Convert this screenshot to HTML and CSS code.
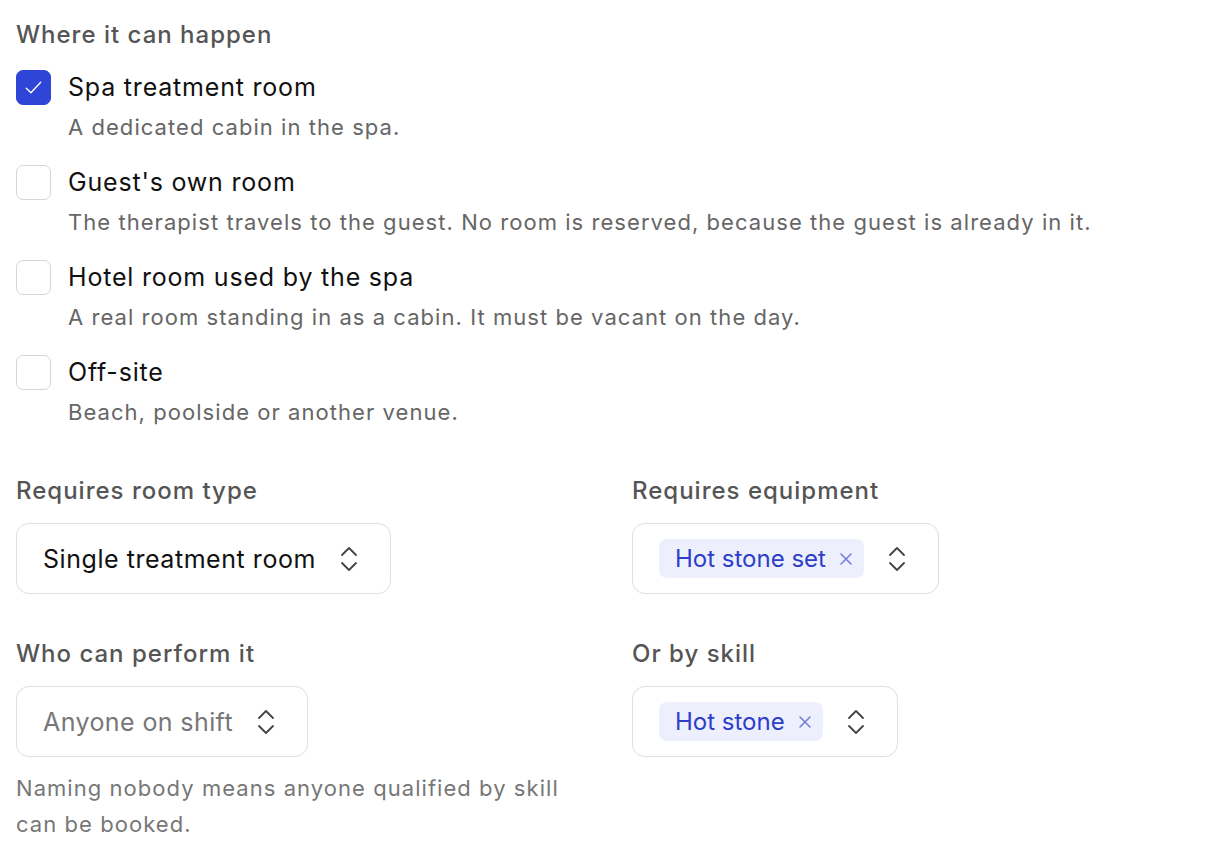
FILE: index.html
```html
<!DOCTYPE html>
<html>
<head>
<meta charset="utf-8">
<link rel="stylesheet" href="styles.css">
</head>
<body>
<div class="page">
  <h2 class="section-title">Where it can happen</h2>
  <div class="options">
    <div class="option">
      <span class="box checked"><svg viewBox="0 0 16 16" width="21" height="21"><path d="M2.5 8.5l3.5 3.5 7.5-8" fill="none" stroke="#fff" stroke-width="1.05" stroke-linecap="round" stroke-linejoin="round"/></svg></span>
      <div class="opt-text">
        <div class="opt-label">Spa treatment room</div>
        <div class="opt-desc">A dedicated cabin in the spa.</div>
      </div>
    </div>
    <div class="option">
      <span class="box"></span>
      <div class="opt-text">
        <div class="opt-label">Guest's own room</div>
        <div class="opt-desc">The therapist travels to the guest. No room is reserved, because the guest is already in it.</div>
      </div>
    </div>
    <div class="option">
      <span class="box"></span>
      <div class="opt-text">
        <div class="opt-label">Hotel room used by the spa</div>
        <div class="opt-desc">A real room standing in as a cabin. It must be vacant on the day.</div>
      </div>
    </div>
    <div class="option">
      <span class="box"></span>
      <div class="opt-text">
        <div class="opt-label">Off-site</div>
        <div class="opt-desc">Beach, poolside or another venue.</div>
      </div>
    </div>
  </div>

  <div class="fields">
    <div class="field">
      <div class="field-label">Requires room type</div>
      <div class="select">
        <span class="value">Single treatment room</span>
        <svg class="chev" viewBox="0 0 18 30" width="18" height="30"><path d="M2 11l7-7 7 7M2 19l7 7 7-7" fill="none" stroke="#444" stroke-width="1.8" stroke-linecap="round" stroke-linejoin="round"/></svg>
      </div>
    </div>
    <div class="field">
      <div class="field-label">Requires equipment</div>
      <div class="select">
        <span class="chip">Hot stone set<svg class="x" viewBox="0 0 14 14" width="14" height="14"><path d="M2 2l10 10M12 2L2 12" fill="none" stroke="#6f7bd6" stroke-width="1.5" stroke-linecap="round"/></svg></span>
        <svg class="chev" viewBox="0 0 18 30" width="18" height="30"><path d="M2 11l7-7 7 7M2 19l7 7 7-7" fill="none" stroke="#444" stroke-width="1.8" stroke-linecap="round" stroke-linejoin="round"/></svg>
      </div>
    </div>
    <div class="field">
      <div class="field-label">Who can perform it</div>
      <div class="select">
        <span class="value placeholder">Anyone on shift</span>
        <svg class="chev" viewBox="0 0 18 30" width="18" height="30"><path d="M2 11l7-7 7 7M2 19l7 7 7-7" fill="none" stroke="#444" stroke-width="1.8" stroke-linecap="round" stroke-linejoin="round"/></svg>
      </div>
      <p class="help">Naming nobody means anyone qualified by skill can be booked.</p>
    </div>
    <div class="field">
      <div class="field-label">Or by skill</div>
      <div class="select">
        <span class="chip">Hot stone<svg class="x" viewBox="0 0 14 14" width="14" height="14"><path d="M2 2l10 10M12 2L2 12" fill="none" stroke="#6f7bd6" stroke-width="1.5" stroke-linecap="round"/></svg></span>
        <svg class="chev" viewBox="0 0 18 30" width="18" height="30"><path d="M2 11l7-7 7 7M2 19l7 7 7-7" fill="none" stroke="#444" stroke-width="1.8" stroke-linecap="round" stroke-linejoin="round"/></svg>
      </div>
    </div>
  </div>
</div>
</body>
</html>
```

FILE: styles.css
```css
* { box-sizing: border-box; }
html, body { margin: 0; padding: 0; background: #fff; }
body {
  font-family: Inter, "Noto Sans", sans-serif;
  color: #111;
}
.page {
  padding: 17px 16px 0 16px;
}
.section-title {
  margin: 0 0 16px 0;
  font-size: 24px;
  line-height: 36px;
  font-weight: 500;
  letter-spacing: 1px;
  color: #555;
}
.options {
  display: flex;
  flex-direction: column;
  gap: 21px;
}
.option {
  display: flex;
  align-items: flex-start;
  gap: 17px;
}
.box {
  flex: none;
  width: 35px;
  height: 35px;
  margin-top: 1px;
  border: 1.5px solid #d6d6d6;
  border-radius: 7px;
  background: #fff;
  display: flex;
  align-items: center;
  justify-content: center;
}
.box.checked {
  background: #2f45d8;
  border-color: #2f45d8;
}
.opt-label {
  font-size: 25px;
  line-height: 36px;
  letter-spacing: 0.8px;
  color: #111;
}
.opt-desc {
  margin-top: 6px;
  font-size: 22px;
  line-height: 32px;
  letter-spacing: 1.05px;
  color: #666;
}
.fields {
  margin-top: 45px;
  display: grid;
  grid-template-columns: 583px 1fr;
  column-gap: 33px;
  row-gap: 42px;
  align-items: start;
}
.field-label {
  font-size: 24px;
  line-height: 36px;
  font-weight: 500;
  letter-spacing: 1px;
  color: #555;
  margin-bottom: 14px;
}
.select {
  display: inline-flex;
  align-items: center;
  height: 71px;
  padding: 0 32px 0 26px;
  border: 1.5px solid #dedede;
  border-radius: 13px;
  gap: 24px;
  background: #fff;
}
.value {
  font-size: 25px;
  letter-spacing: 0.55px;
  color: #111;
}
.value.placeholder { color: #777; letter-spacing: 0.4px; }
.chev { flex: none; }
.chip {
  display: inline-flex;
  align-items: center;
  height: 39px;
  padding: 0 11px 0 16px;
  border-radius: 8px;
  background: #edeffd;
  color: #2c3ec9;
  font-size: 24px;
  gap: 13px;
}
.x { flex: none; }
.help {
  margin: 13px 0 0 0;
  font-size: 22px;
  line-height: 36px;
  letter-spacing: 1.05px;
  color: #777;
}
```
